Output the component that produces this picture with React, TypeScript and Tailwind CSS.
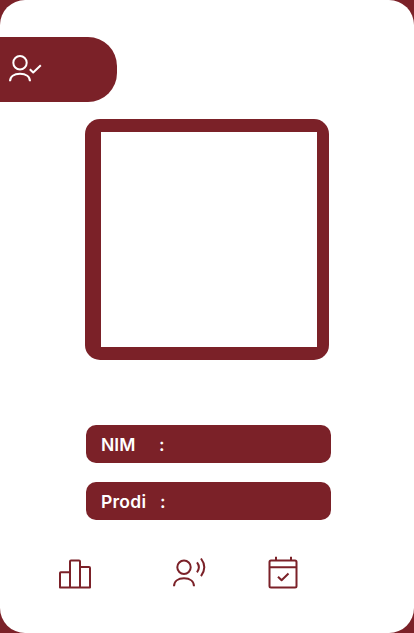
import React from "react";

function Field({ label, labelClass }: { label: string; labelClass: string }) {
  return (
    <div className="flex h-[38px] w-[245px] items-center rounded-[10px] bg-[#7b2128] pt-px pl-[15px] font-['Inter','Open_Sans',sans-serif] text-[17.5px] leading-none font-semibold text-white">
      <span className={labelClass}>{label}</span>
      <span>:</span>
    </div>
  );
}

const line = {
  fill: "none",
  stroke: "currentColor",
  strokeWidth: 2,
  strokeLinecap: "butt" as const,
  strokeLinejoin: "round" as const,
};

function UserCheck() {
  return (
    <svg width="36" height="30" viewBox="0 0 36 30" {...line}>
      <circle cx="12" cy="10.7" r="6.7" />
      <path d="M2 29.3C2 24.5 6 21.7 12 21.7S22 24.5 22 29.3" />
      <path d="M21.8 17.2L25.2 20.5L32.8 13.3" />
    </svg>
  );
}

function Chart() {
  return (
    <svg width="34" height="32" viewBox="0 0 34 32" {...line}>
      <path d="M2 29.5V15Q2 14.3 2.7 14.3H12V29.5ZM12 29.5V3.5Q12 2.5 13 2.5H21Q22 2.5 22 3.5V29.5ZM22 9H31Q32 9 32 10V29.5H12" />
    </svg>
  );
}

function UserVoice() {
  return (
    <svg width="36" height="32" viewBox="0 0 36 32" {...line}>
      <circle cx="13" cy="11.2" r="6.7" />
      <path d="M3 30.3C3 25.3 7 22.3 13 22.3S23 25.3 23 30.3" />
      <path d="M26 6.3Q29.8 11.3 26 16.3M30 2.5Q36.6 11.3 30 20.1" />
    </svg>
  );
}

function Calendar() {
  return (
    <svg width="32" height="34" viewBox="0 0 32 34" {...line}>
      <rect x="2.5" y="4.5" width="27" height="27" rx="1.5" />
      <path d="M2.5 11.3H29.5M9 .8V4.5M24 .8V4.5M11 20.7L14.6 24.3L21.5 17.5" />
    </svg>
  );
}

export default function App() {
  return (
    <div className="h-[633px] w-[414px] bg-[#7b2128]">
      <main className="flex h-full w-full flex-col rounded-[25px] bg-white pt-[37px]">
        <header className="flex h-[65px] w-[117px] rounded-r-[29px] bg-[#7b2128] pt-[15px] pl-2 text-white">
          <UserCheck />
        </header>
        <section className="mt-[17px] ml-[85px] h-[241px] w-[244px] rounded-[15px] bg-[#7b2128] pt-[13px] pl-4">
          <div className="h-[215px] w-[216px] bg-white" />
        </section>
        <section className="mt-[65px] ml-[86px] flex flex-col gap-[19px]">
          <Field label="NIM" labelClass="w-[58px]" />
          <Field label="Prodi" labelClass="w-[59px] tracking-[0.25px]" />
        </section>
        <nav className="mt-[36px] ml-[58px] flex items-start text-[#7b2128]">
          <div className="pt-[2px]"><Chart /></div>
          <div className="ml-[79px]"><UserVoice /></div>
          <div className="ml-[60px]"><Calendar /></div>
        </nav>
      </main>
    </div>
  );
}
